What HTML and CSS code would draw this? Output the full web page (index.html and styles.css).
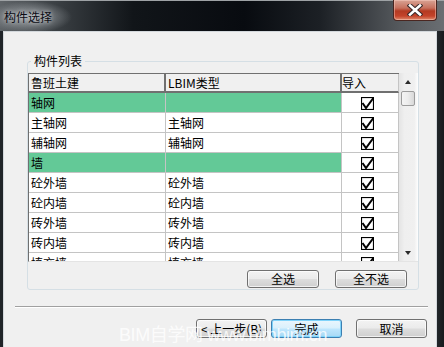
FILE: index.html
```html
<!DOCTYPE html>
<html lang="zh-CN">
<head>
    <meta charset="UTF-8">
    <meta name="viewport" content="width=device-width, initial-scale=1.0">
    <title>构件选择</title>
    <link rel="stylesheet" href="styles.css">
</head>
<body>
    <div class="window">
        <div class="titlebar">
            <span class="title">构件选择</span>
            <button class="close-btn" aria-label="关闭">
                <svg width="16" height="12" viewBox="0 0 16 12">
                    <path d="M3 1.5 L13 10.5 M13 1.5 L3 10.5" stroke="#3a2a2a" stroke-width="4.6" stroke-linecap="square"/>
                    <path d="M3 1.5 L13 10.5 M13 1.5 L3 10.5" stroke="#ffffff" stroke-width="2.6" stroke-linecap="square"/>
                </svg>
            </button>
        </div>
        <div class="client">
            <fieldset class="group">
                <legend>构件列表</legend>
                <div class="list">
                    <div class="grid">
                        <div class="row header">
                            <div class="cell">鲁班土建</div>
                            <div class="cell">LBIM类型</div>
                            <div class="cell">导入</div>
                        </div>
                        <div id="rows"></div>
                    </div>
                    <div class="scrollbar">
                        <div class="arrow up"></div>
                        <div class="thumb"></div>
                        <div class="track"></div>
                        <div class="arrow down"></div>
                    </div>
                </div>
                <div class="group-buttons">
                    <button class="btn">全选</button>
                    <button class="btn">全不选</button>
                </div>
            </fieldset>
            <div class="separator"></div>
            <div class="dialog-buttons">
                <button class="btn">&lt; 上一步(B)</button>
                <button class="btn default">完成</button>
                <button class="btn cancel">取消</button>
            </div>
        </div>
        <div class="watermark">BIM自学网 www.bimbim.cn</div>
    </div>
    <script>
        const items = [
            { name: '轴网', type: '', group: true },
            { name: '主轴网', type: '主轴网' },
            { name: '辅轴网', type: '辅轴网' },
            { name: '墙', type: '', group: true },
            { name: '砼外墙', type: '砼外墙' },
            { name: '砼内墙', type: '砼内墙' },
            { name: '砖外墙', type: '砖外墙' },
            { name: '砖内墙', type: '砖内墙' },
            { name: '填充墙', type: '填充墙' }
        ];
        const checkSvg = '<svg width="13" height="13" viewBox="0 0 13 13">' +
            '<rect x="0.5" y="0.5" width="12" height="12" fill="#fff" stroke="#000" stroke-width="1.2"/>' +
            '<path d="M1.5 6 L5 11 L12.5 0.8" fill="none" stroke="#000" stroke-width="2"/></svg>';
        const rows = document.getElementById('rows');
        items.forEach(item => {
            const row = document.createElement('div');
            row.className = item.group ? 'row group-row' : 'row';
            row.innerHTML = `
                <div class="cell">${item.name}</div>
                <div class="cell">${item.type}</div>
                <div class="cell check">${checkSvg}</div>
            `;
            rows.appendChild(row);
        });
    </script>
</body>
</html>
```

FILE: styles.css
```css
body {
    margin: 0;
    width: 444px;
    height: 347px;
    overflow: hidden;
    font-family: "Noto Sans CJK SC", "Liberation Sans", sans-serif;
    font-size: 12px;
}
.window {
    position: relative;
    display: flex;
    flex-direction: column;
    height: 347px;
    background: linear-gradient(90deg, #202428 0%, #2c3136 97%, #171a1d 100%);
}
.titlebar {
    flex: none;
    height: 31px;
    display: flex;
    align-items: flex-start;
    justify-content: space-between;
    border-top: 1px solid #9ea2a5;
    box-sizing: border-box;
    background:
        radial-gradient(ellipse 42px 16px at 30px 16px, rgba(175, 180, 184, 0.85), rgba(175, 180, 184, 0) 100%),
        linear-gradient(90deg, #5f6468 0%, #3c4145 12%, #111519 30%, #080b10 55%, #1c2025 72%, #55595d 90%, #6a6e72 100%);
}
.title {
    margin: 8px 0 0 4px;
    line-height: 16px;
    color: #0c0c14;
    text-shadow: 0 0 4px rgba(230, 232, 235, 0.9);
}
.close-btn {
    width: 44px;
    height: 21px;
    margin: -1px 7px 0 0;
    padding: 0;
    border: 1px solid #4a2620;
    border-top: none;
    border-radius: 0 0 4px 4px;
    display: flex;
    align-items: center;
    justify-content: center;
    background: linear-gradient(180deg, #d8a394 0%, #c7715e 40%, #b33a22 55%, #c4432a 80%, #de8a6c 100%);
    box-shadow: inset 0 0 0 1px rgba(255, 210, 200, 0.45);
}
.client {
    flex: 1;
    margin: 0 7px 0 3px;
    background: #f0f0f0;
    border: 1px solid #d3d8dc;
    border-bottom: none;
    padding-top: 21px;
}
.group {
    margin: 0 0 0 23px;
    width: 391px;
    box-sizing: border-box;
    padding: 0 0 1px 0;
    border: 1px solid #d5dfe5;
    border-radius: 3px;
}
.group legend {
    margin-left: 3px;
    padding: 0 3px;
    line-height: 16px;
    color: #000;
}
.list {
    display: flex;
    margin-top: 4px;
    height: 188px;
    border-left: 1px solid #707070;
    border-bottom: 1px solid #e4e4e4;
    background: #fff;
}
.grid {
    width: 370px;
    overflow: hidden;
    border-top: 1px solid #707070;
}
.row {
    display: grid;
    grid-template-columns: 137px 176px 57px;
    height: 20px;
    background: #fff;
}
.cell {
    box-sizing: border-box;
    border-right: 1px solid #c4c4c4;
    border-bottom: 1px solid #c4c4c4;
    padding-left: 2px;
    line-height: 19px;
    white-space: nowrap;
    overflow: hidden;
    color: #000;
}
.header {
    height: 19px;
    background: #f0f0f0;
}
.header .cell {
    border-right: 2px solid #707070;
    border-bottom: 2px solid #707070;
    line-height: 17px;
}
.header .cell:last-child {
    border-right: 1px solid #c4c4c4;
    padding-left: 0;
}
.group-row {
    background: #63c997;
}
.check {
    padding: 1px 0 0 19px;
    display: flex;
    align-items: center;
    background: #fff;
}
.scrollbar {
    width: 18px;
    display: flex;
    flex-direction: column;
    align-items: center;
    background: linear-gradient(90deg, #e4e4e4 0%, #efefef 30%, #f0f0f0 85%, #fafafa 100%);
    border-right: 1px solid #fcfcfc;
}
.arrow {
    height: 17px;
    width: 100%;
    display: flex;
    align-items: center;
    justify-content: center;
}
.arrow::before {
    content: "";
    border-left: 3.5px solid transparent;
    border-right: 3.5px solid transparent;
}
.arrow.up::before {
    border-bottom: 4px solid #2a2a2a;
}
.arrow.down::before {
    border-top: 4px solid #2a2a2a;
}
.thumb {
    width: 12px;
    height: 13px;
    margin-top: 1px;
    border: 1px solid #9c9c9c;
    border-radius: 2px;
    background: linear-gradient(90deg, #f4f4f4 0%, #ececec 50%, #d8d8d8 100%);
}
.track {
    flex: 1;
}
.group-buttons {
    display: flex;
    justify-content: flex-end;
    gap: 16px;
    padding: 8px 11px 0 0;
}
.btn {
    width: 72px;
    height: 18px;
    padding: 0;
    border: 1px solid #707070;
    border-radius: 3px;
    font-family: "Noto Sans CJK SC", "Liberation Sans", sans-serif;
    font-size: 12px;
    line-height: 16px;
    color: #000;
    background: linear-gradient(180deg, #f3f3f3 0%, #ebebeb 48%, #dddddd 52%, #cfcfcf 100%);
    box-shadow: inset 0 0 0 1px rgba(255, 255, 255, 0.7);
}
.separator {
    width: 413px;
    margin: 16px 0 0 11px;
    border-top: 1px solid #a0a0a0;
    border-bottom: 1px solid #ffffff;
}
.dialog-buttons {
    display: flex;
    justify-content: flex-end;
    gap: 4px;
    padding: 11px 9px 0 0;
}
.dialog-buttons .btn {
    width: 71px;
    height: 19px;
}
.dialog-buttons .btn.cancel {
    margin-left: 10px;
}
.btn.default {
    border-color: #3c7fb1;
    background: linear-gradient(180deg, #eaf6fd 0%, #d9f0fc 48%, #bee6fd 52%, #a7d9f5 100%);
    box-shadow: inset 0 0 0 1px #7fd3fa;
}
.watermark {
    position: absolute;
    left: 119px;
    top: 324px;
    font-family: "Liberation Sans", "Noto Sans CJK SC", sans-serif;
    font-size: 18px;
    letter-spacing: -0.4px;
    line-height: 22px;
    color: rgba(255, 255, 255, 0.8);
    white-space: nowrap;
    pointer-events: none;
}
```
